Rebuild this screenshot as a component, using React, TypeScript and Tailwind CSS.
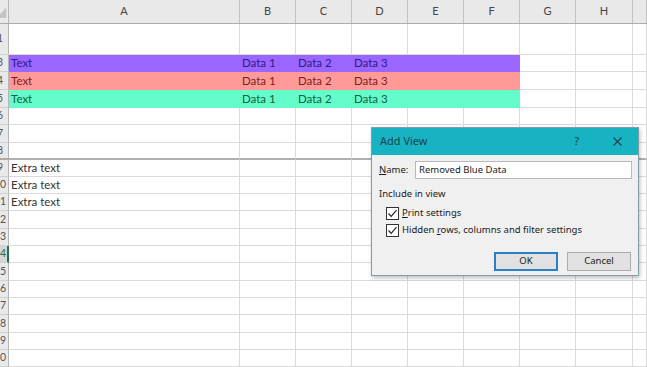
import React from "react";

type Col = { label: string; w: string };
const cols: Col[] = [
  { label: "A", w: "w-[231px]" },
  { label: "B", w: "w-[56px]" },
  { label: "C", w: "w-[56px]" },
  { label: "D", w: "w-[56px]" },
  { label: "E", w: "w-[56px]" },
  { label: "F", w: "w-[56px]" },
  { label: "G", w: "w-[56px]" },
  { label: "H", w: "w-[57px]" },
  { label: "", w: "flex-1" },
];

type Row = {
  n: string;
  h: string;
  fill?: string;
  text?: string;
  cells?: string[];
  thick?: boolean;
  sel?: boolean;
};

const rows: Row[] = [
  { n: "1", h: "h-[31px]" },
  { n: "3", h: "h-[17px]", fill: "bg-[#9a66ff]", text: "text-[#2a1b86]", cells: ["Text", "Data 1", "Data 2", "Data 3"] },
  { n: "4", h: "h-[18px]", fill: "bg-[#ff9a98]", text: "text-[#7e1d1a]", cells: ["Text", "Data 1", "Data 2", "Data 3"] },
  { n: "5", h: "h-[18px]", fill: "bg-[#64fcca]", text: "text-[#115f43]", cells: ["Text", "Data 1", "Data 2", "Data 3"] },
  { n: "6", h: "h-[17px]" },
  { n: "7", h: "h-[18px]" },
  { n: "8", h: "h-[17px]", thick: true },
  { n: "9", h: "h-[17px]", cells: ["Extra text"] },
  { n: "10", h: "h-[17px]", cells: ["Extra text"] },
  { n: "11", h: "h-[17px]", cells: ["Extra text"] },
  { n: "12", h: "h-[18px]" },
  { n: "13", h: "h-[17px]" },
  { n: "14", h: "h-[17px]", sel: true },
  { n: "15", h: "h-[18px]" },
  { n: "16", h: "h-[17px]" },
  { n: "17", h: "h-[17px]" },
  { n: "18", h: "h-[18px]" },
  { n: "19", h: "h-[17px]" },
  { n: "20", h: "h-[17px]" },
];

function Check() {
  return (
    <span className="flex h-[13px] w-[13px] items-center justify-center border border-[#333] bg-white">
      <svg width="11" height="11" viewBox="0 0 11 11">
        <polyline points="1.5,5.5 4.2,8.3 9.5,2.2" fill="none" stroke="#222" strokeWidth="1.2" />
      </svg>
    </span>
  );
}

export default function App() {
  return (
    <div className="relative h-[367px] w-[647px] overflow-hidden bg-white font-['Lato',sans-serif]">
      {/* column header */}
      <div className="flex h-[24px] border-b border-[#ababab] bg-[#e9e9e9]">
        <div className="flex w-[9px] items-end overflow-hidden border-r border-[#b5b5b5]">
          <svg width="9" height="24" viewBox="0 0 9 24">
            <polygon points="7,8 7,20 -4,20" fill="#c4c4c4" />
          </svg>
        </div>
        {cols.map((c, i) => (
          <div
            key={i}
            className={`${c.w} flex items-center justify-center border-r border-[#c3c3c3] text-[11px] text-[#444]`}
          >
            {c.label}
          </div>
        ))}
      </div>
      {/* rows */}
      {rows.map((r) => (
        <div key={r.n} className={`flex ${r.h}`}>
          <div
            className={`w-[9px] overflow-hidden border-b ${
              r.sel ? "border-r-2 border-r-[#217346] bg-[#d6d6d6] text-[#217346]" : "border-r border-r-[#b5b5b5] bg-[#e9e9e9] text-[#555]"
            } ${r.thick ? "border-b-2 border-b-[#aaaaaa]" : "border-b-[#d0d0d0]"}`}
          >
            <div className="ml-[-9px] flex h-full w-[18px] items-center justify-center text-[10.5px]">{r.n}</div>
          </div>
          {cols.map((c, i) => {
            const filled = r.fill && i < 6;
            const content = r.cells ? (i === 0 ? r.cells[0] : i <= 3 ? r.cells[i] : undefined) : undefined;
            return (
              <div
                key={i}
                className={`${c.w} flex items-center overflow-visible whitespace-nowrap border-r border-b px-[2px] text-[11.5px] ${
                  filled ? `${r.fill} border-transparent` : "border-[#dadada]"
                } ${r.thick && !filled ? "border-b-2 border-b-[#b0b0b0]" : ""} ${r.text ?? "text-[#333]"}`}
              >
                {content}
              </div>
            );
          })}
        </div>
      ))}

      {/* dialog */}
      <div className="absolute left-[371px] top-[127px] flex h-[149px] w-[268px] flex-col border border-[#7f9ea3] bg-[#f0f0f0] font-['Noto_Sans',sans-serif] text-[9.5px] text-[#1a1a1a] shadow-[1px_2px_4px_rgba(0,0,0,0.25)]">
        <div className="flex h-[27px] items-center bg-[#18b3c3] pl-[8px] pr-[16px] text-[11px] text-[#1f4348]">
          <span className="flex-1">Add View</span>
          <span className="mr-[34px] text-[11px]">?</span>
          <svg width="9" height="9" viewBox="0 0 9 9">
            <path d="M0.5 0.5 L8.5 8.5 M8.5 0.5 L0.5 8.5" stroke="#1f4348" strokeWidth="1.1" />
          </svg>
        </div>
        <div className="flex flex-col px-[6px] pt-[6px]">
          <div className="flex h-[18px] items-center">
            <span className="w-[37px] pl-[1px]">
              <span className="underline">N</span>ame:
            </span>
            <div className="flex h-[18px] flex-1 items-center border border-[#b9b9b9] bg-white pl-[3px] text-[9.5px]">
              Removed Blue Data
            </div>
          </div>
          <div className="mt-[9px] pl-[1px] leading-[12px]">Include in view</div>
          <div className="mt-[6px] flex items-center gap-[3px] pl-[8px]">
            <Check />
            <span>
              <span className="underline">P</span>rint settings
            </span>
          </div>
          <div className="mt-[3px] flex items-center gap-[3px] pl-[8px]">
            <Check />
            <span>
              Hidden <span className="underline">r</span>ows, columns and filter settings
            </span>
          </div>
          <div className="mt-[14px] flex justify-end gap-[9px] pr-[1px]">
            <div className="flex h-[19px] w-[64px] items-center justify-center border-2 border-[#2b7fc9] bg-[#e1e1e1]">OK</div>
            <div className="flex h-[19px] w-[64px] items-center justify-center border border-[#adadad] bg-[#e1e1e1]">Cancel</div>
          </div>
        </div>
      </div>
    </div>
  );
}
